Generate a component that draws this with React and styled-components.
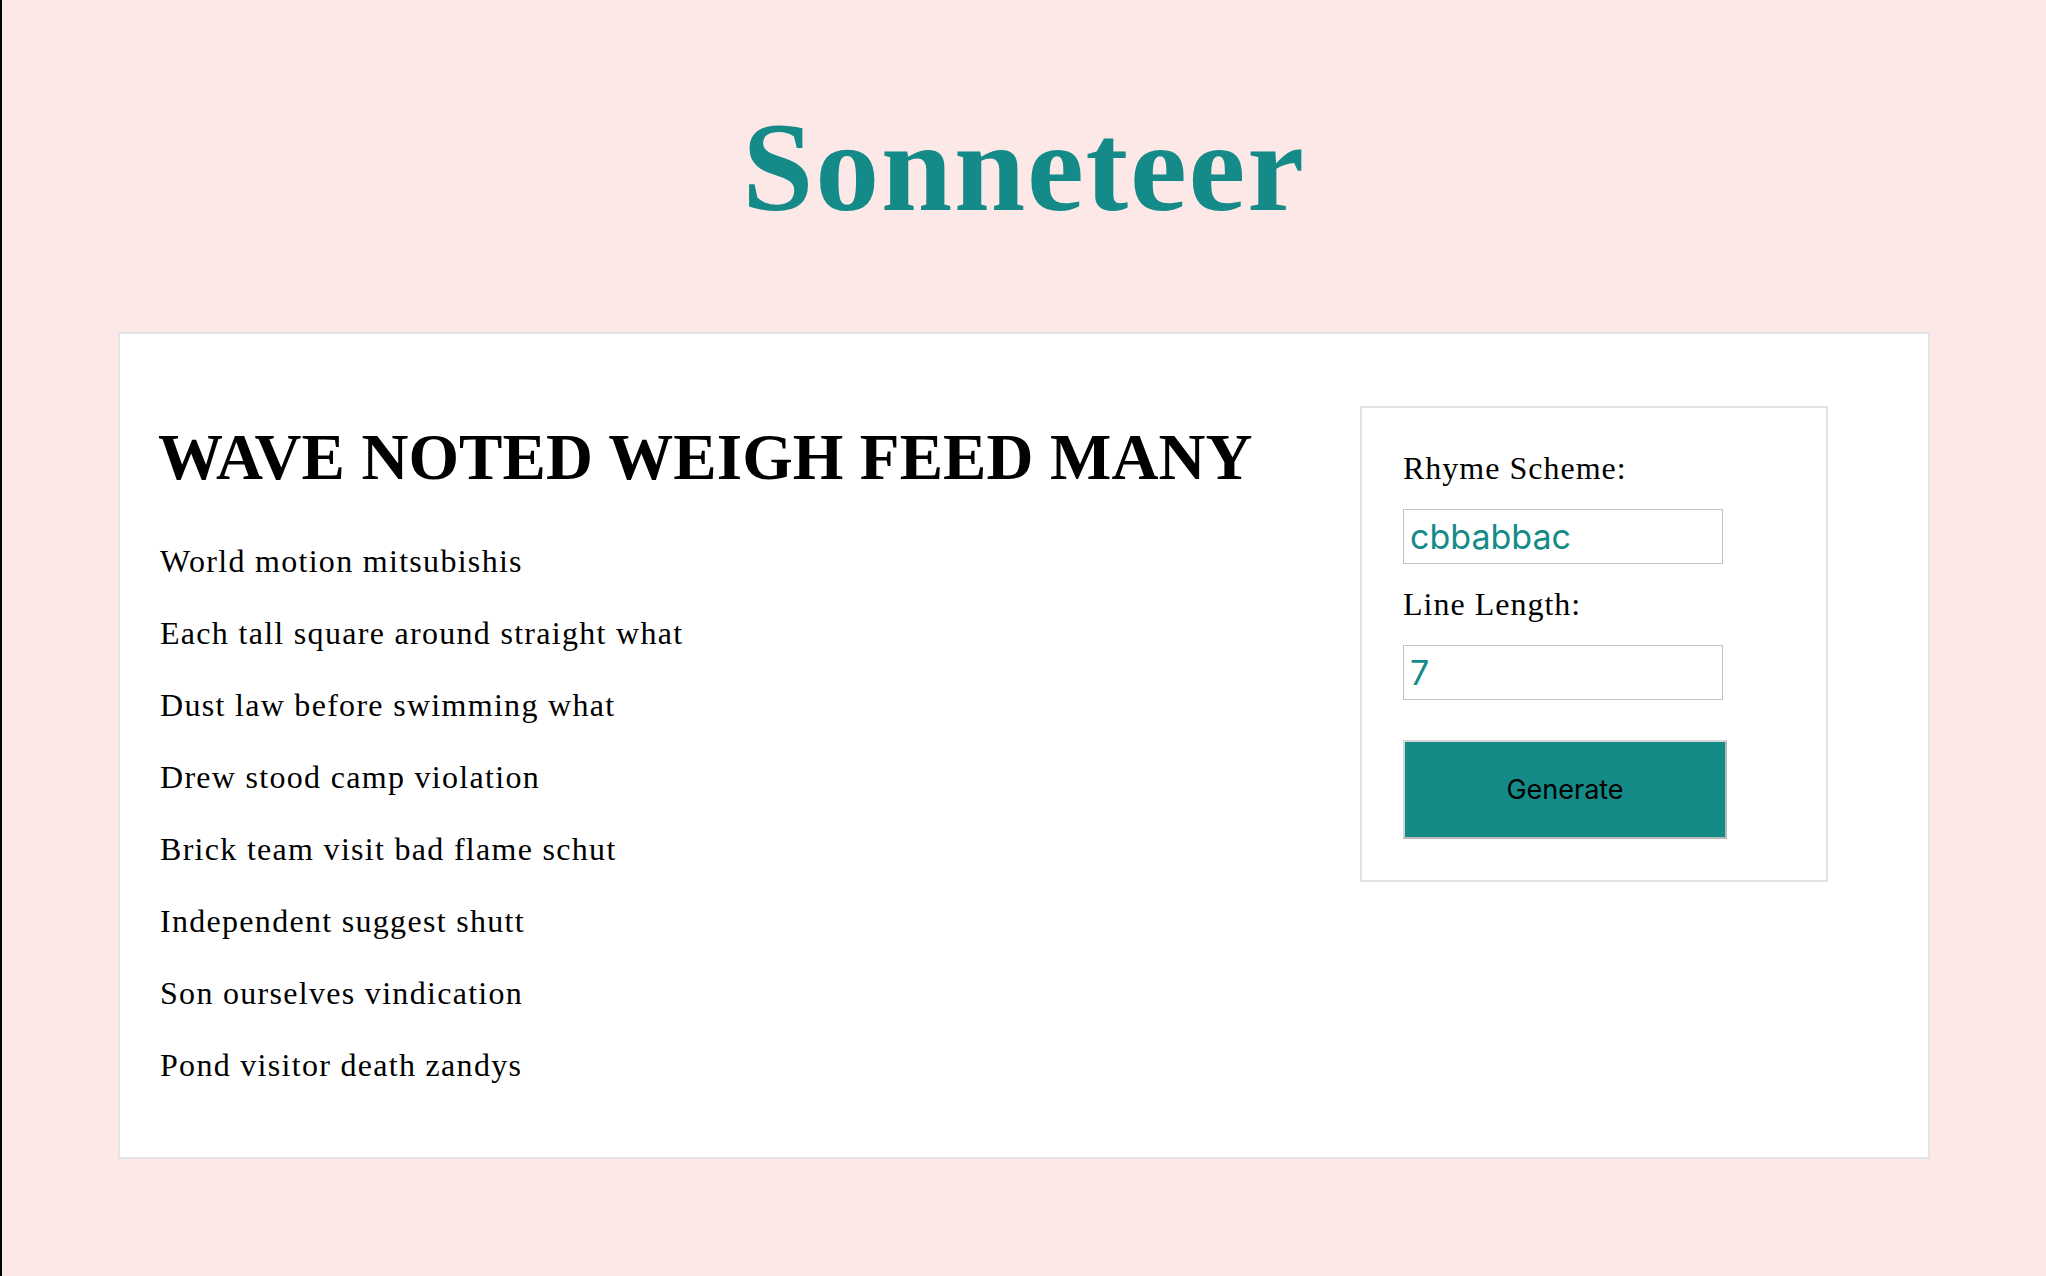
import React, { useState } from "react";
import styled, { createGlobalStyle } from "styled-components";

const GlobalStyle = createGlobalStyle`
  html, body {
    margin: 0;
    padding: 0;
  }
  body {
    background: #fde8e8;
    border-left: 2px solid #000;
    min-height: 1276px;
    box-sizing: border-box;
    font-family: "Liberation Serif", "Times New Roman", serif;
    color: #000;
  }
`;

const Page = styled.div`
  display: flex;
  flex-direction: column;
  align-items: center;
  padding-top: 103px;
`;

const Title = styled.h1`
  margin: 0 0 101px;
  font-family: "Liberation Serif", "Times New Roman", serif;
  font-weight: 700;
  font-size: 128px;
  line-height: 128px;
  letter-spacing: 1.8px;
  color: #148b88;
  text-align: center;
`;

const Card = styled.main`
  box-sizing: border-box;
  width: 1812px;
  background: #fff;
  border: 2px solid #e5e4e4;
  padding: 40px;
  display: flex;
  justify-content: space-between;
  align-items: flex-start;
`;

const Poem = styled.section`
  display: flex;
  flex-direction: column;
`;

const PoemTitle = styled.h2`
  margin: 46px 0 47px -2px;
  font-size: 65px;
  line-height: 74px;
  font-weight: 700;
  letter-spacing: 0.1px;
`;

const Line = styled.p`
  margin: 0 0 32px;
  font-size: 32px;
  line-height: 40px;
  letter-spacing: 1.3px;
`;

const FormBox = styled.form`
  box-sizing: border-box;
  width: 468px;
  margin: 32px 60px 0 0;
  border: 2px solid #e3e3e3;
  padding: 40px 41px 41px;
  display: flex;
  flex-direction: column;
  align-items: flex-start;
`;

const Label = styled.label`
  font-size: 32px;
  line-height: 40px;
  letter-spacing: 1px;
  margin-bottom: 21px;
`;

const Field = styled.input`
  box-sizing: border-box;
  width: 320px;
  height: 55px;
  border: 1px solid #c2c2c2;
  border-radius: 0;
  padding: 0 6px;
  margin: 0 0 20px;
  font-family: Inter, "Noto Sans", sans-serif;
  font-size: 34px;
  color: #148b88;
  background: #fff;
  outline: none;
`;

const Button = styled.button`
  box-sizing: border-box;
  width: 324px;
  height: 99px;
  margin-top: 20px;
  background: #158b88;
  border-style: solid;
  border-width: 2px;
  border-color: #d6d6d6 #b9b9b9 #b9b9b9 #d6d6d6;
  font-family: Inter, "Noto Sans", sans-serif;
  font-size: 27px;
  color: #000;
  cursor: pointer;
`;

const lines = [
  "World motion mitsubishis",
  "Each tall square around straight what",
  "Dust law before swimming what",
  "Drew stood camp violation",
  "Brick team visit bad flame schut",
  "Independent suggest shutt",
  "Son ourselves vindication",
  "Pond visitor death zandys",
];

export default function App() {
  const [scheme, setScheme] = useState("cbbabbac");
  const [len, setLen] = useState("7");
  return (
    <>
      <GlobalStyle />
      <Page>
        <Title>Sonneteer</Title>
        <Card>
          <Poem>
            <PoemTitle>WAVE NOTED WEIGH FEED MANY</PoemTitle>
            {lines.map((l) => (
              <Line key={l}>{l}</Line>
            ))}
          </Poem>
          <FormBox onSubmit={(e) => e.preventDefault()}>
            <Label htmlFor="scheme">Rhyme Scheme:</Label>
            <Field id="scheme" value={scheme} onChange={(e) => setScheme(e.target.value)} />
            <Label htmlFor="len">Line Length:</Label>
            <Field id="len" value={len} onChange={(e) => setLen(e.target.value)} />
            <Button type="submit">Generate</Button>
          </FormBox>
        </Card>
      </Page>
    </>
  );
}
